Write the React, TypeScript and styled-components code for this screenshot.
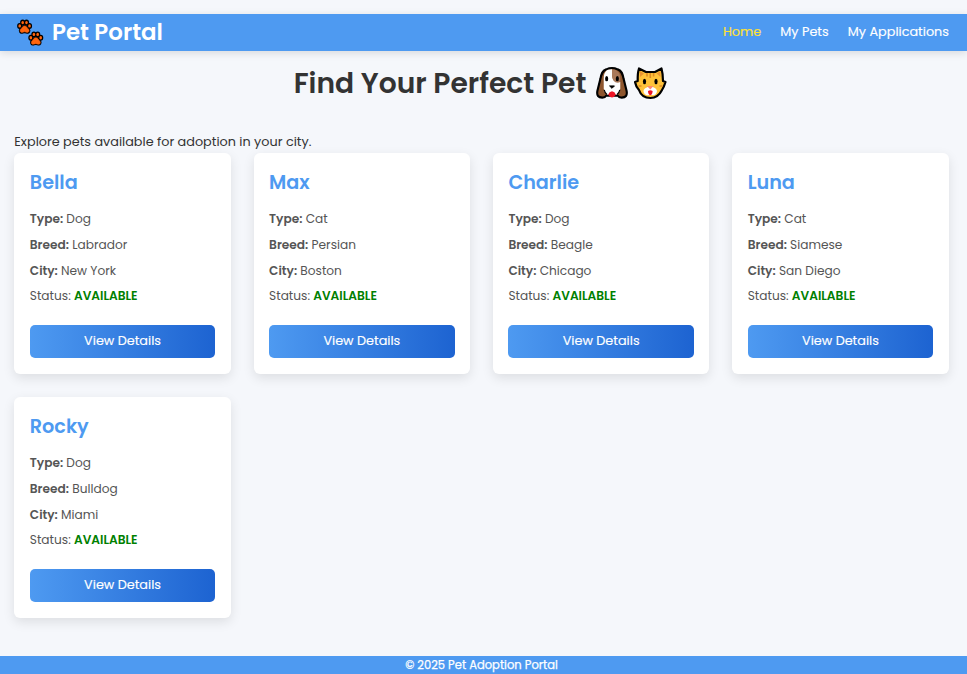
import React from "react";
import styled, { createGlobalStyle } from "styled-components";

const Global = createGlobalStyle`
  * { box-sizing: border-box; margin: 0; padding: 0; }
  body {
    background: #f5f7fb;
    color: #333;
    font-family: Poppins, Inter, sans-serif;
  }
`;

const Page = styled.div`
  height: 674px;
  padding-top: 14px;
  display: flex;
  flex-direction: column;
  overflow: hidden;
`;

const Header = styled.header`
  height: 37px;
  flex: none;
  padding: 0 18px 0 16px;
  display: flex;
  align-items: center;
  justify-content: space-between;
  background: #4e9af1;
  box-shadow: 0 2px 8px rgba(0, 0, 0, 0.12);
`;

const Brand = styled.div`
  display: flex;
  align-items: center;
  gap: 8px;
  color: #fff;
  font-size: 22.9px;
  font-weight: 600;
  line-height: 35px;
  white-space: nowrap;

  > span { padding-bottom: 1px; }
`;

const Nav = styled.nav`
  display: flex;
  gap: 19.2px;
  padding-bottom: 2px;
`;

const NavLink = styled.a<{ $active?: boolean }>`
  color: ${(p) => (p.$active ? "#ffe135" : "#fff")};
  font-size: 12.8px;
  font-weight: 400;
  line-height: 20px;
  white-space: nowrap;
  -webkit-text-stroke: 0.15px currentColor;
`;

const Main = styled.main`
  flex: 1;
  padding: 0 18.3px 0 14.3px;
`;

const Title = styled.h1`
  height: 64px;
  display: flex;
  align-items: center;
  justify-content: center;
  padding-right: 2px;
  font-size: 28.16px;
  font-weight: 600;
  white-space: nowrap;

  > span:first-child { padding-top: 1px; }
`;

const Faces = styled.span`
  display: flex;
  gap: 4px;
  margin-left: 9px;
`;

const Intro = styled.p`
  height: 21px;
  margin-top: 17px;
  font-size: 12.8px;
  line-height: 20px;
`;

const Grid = styled.section`
  display: grid;
  grid-template-columns: repeat(4, 1fr);
  gap: 23px 22.8px;
`;

const Card = styled.article`
  height: 221px;
  padding: 15px 15.5px 16px;
  display: flex;
  flex-direction: column;
  border-radius: 6px;
  background: #fff;
  box-shadow: 0 4px 12px rgba(0, 0, 0, 0.1);
`;

const Name = styled.h2`
  margin-bottom: 8px;
  color: #4e9af1;
  font-size: 19.2px;
  font-weight: 600;
  line-height: 30px;
`;

const Detail = styled.p`
  color: #555;
  font-size: 12.16px;
  line-height: 25.8px;
  white-space: nowrap;

  strong { font-weight: 600; }
`;

const Status = styled.strong`
  color: green;
`;

const DetailsButton = styled.button`
  height: 33px;
  margin-top: auto;
  padding-bottom: 2px;
  border: 0;
  border-radius: 5px;
  background: linear-gradient(90deg, #4e9af1, #1d63d1);
  color: #fff;
  font: 400 12.8px Poppins, Inter, sans-serif;
  -webkit-text-stroke: 0.15px currentColor;
`;

const Footer = styled.footer`
  height: 18px;
  flex: none;
  background: #4e9af1;
  color: #fff;
  font-size: 11.52px;
  font-weight: 400;
  line-height: 18px;
  text-align: center;
  padding-right: 4px;
  -webkit-text-stroke: 0.25px currentColor;
`;

const Paw = () => (
  <>
    <g stroke="#000" strokeWidth="2.6" fill="#000">
      <ellipse cx="2.4" cy="6" rx="1.3" ry="1.7" />
      <ellipse cx="5.4" cy="2.7" rx="1.3" ry="1.7" />
      <ellipse cx="9.2" cy="2.7" rx="1.3" ry="1.7" />
      <ellipse cx="12.2" cy="6" rx="1.3" ry="1.7" />
      <path d="M7.3 6C5.2 6 4.7 8 3.5 9.2 1.9 11 3.3 13 5 12.5Q7.3 11.4 9.6 12.5C11.3 13 12.7 11 11.1 9.2 9.9 8 9.4 6 7.3 6Z" />
    </g>
    <g fill="#ff650d">
      <ellipse cx="2.4" cy="6" rx="1.3" ry="1.7" />
      <ellipse cx="5.4" cy="2.7" rx="1.3" ry="1.7" />
      <ellipse cx="9.2" cy="2.7" rx="1.3" ry="1.7" />
      <ellipse cx="12.2" cy="6" rx="1.3" ry="1.7" />
      <path d="M7.3 6C5.2 6 4.7 8 3.5 9.2 1.9 11 3.3 13 5 12.5Q7.3 11.4 9.6 12.5C11.3 13 12.7 11 11.1 9.2 9.9 8 9.4 6 7.3 6Z" stroke="#ff650d" strokeWidth=".5" />
    </g>
  </>
);

const Paws = () => (
  <svg width="28" height="28" viewBox="0 0 28 28">
    <g transform="translate(1.3 .9)"><Paw /></g>
    <g transform="translate(12.5 12.7)"><Paw /></g>
  </svg>
);

const DogFace = () => (
  <svg width="34" height="34" viewBox="-.5 0 35 34">
    <path d="M11 3C7 4 6 8 5 13L2 25C1 30 3 32 7 32Q10 32 11 30H23Q24 32 27 32C31 32 33 30 32 25L29 13C28 8 27 4 23 3Q17 .5 11 3Z" fill="#8e562e" stroke="#000" strokeWidth="2.2" strokeLinejoin="round" />
    <path d="M17 2.8C11 2.5 8.5 6 8.5 12V23Q9 27 12 29H22Q25 27 25.5 23V16L20 15Q17 13 17 8Z" fill="#fff" />
    <path d="M17 2.8V9C17 15 21 18 25.5 16V12C25.5 7 23 3 17 2.8Z" fill="#a9795a" />
    <path d="M9 24Q9.5 27 12 29M25 24Q24.5 27 22 29" fill="none" stroke="#000" strokeWidth="1.2" />
    <ellipse cx="11.5" cy="12.5" rx="1.6" ry="2.8" />
    <ellipse cx="22.5" cy="12.5" rx="1.6" ry="2.8" />
    <path d="M14.5 20H19.5L17 22.5Z" stroke="#000" strokeLinejoin="round" />
    <path d="M13 29Q14 26 17 25.5 20 26 21 29 19 31.8 17 31.8 15 31.8 13 29Z" fill="#ed1525" />
  </svg>
);

const CatFace = () => (
  <svg width="34" height="34" viewBox="0 0 34 34">
    <path d="M6 2.5L13 6H22L28.5 2.5Q30 8 30 15L32.5 16Q31 21 29 24C26 30 22 32 17.5 32S8 30 6 24Q3 21 2 16L4.7 15Q4.5 7 6 2.5Z" fill="#ffc23a" stroke="#000" strokeWidth="2.2" strokeLinejoin="round" />
    <path d="M7 5L11 7.5 7 11ZM27.5 5L23.5 7.5 27.5 11Z" fill="#e99431" />
    <path d="M14 7V10.5M17.3 7V12M20.6 7V10.5M5.5 20H8.5M26.5 20H29.5" stroke="#de8b25" strokeWidth="1.6" />
    <ellipse cx="11.5" cy="15.5" rx="1.6" ry="2.7" />
    <ellipse cx="23" cy="15.5" rx="1.6" ry="2.7" />
    <path d="M17.3 20C15 21 11 22 10.5 25 10.5 29 15 30 17.3 28.5 19.6 30 24 29 24 25 23.5 22 19.6 21 17.3 20Z" fill="#fff" />
    <path d="M14 20H20.5L17.3 23.5Z" fill="#ff876d" />
    <path d="M15 25Q17.3 23.5 19.6 25 19.4 28.8 17.3 29.3 15.2 28.8 15 25Z" fill="#ed1525" />
  </svg>
);

const pets = [
  { name: "Bella", type: "Dog", breed: "Labrador", city: "New York" },
  { name: "Max", type: "Cat", breed: "Persian", city: "Boston" },
  { name: "Charlie", type: "Dog", breed: "Beagle", city: "Chicago" },
  { name: "Luna", type: "Cat", breed: "Siamese", city: "San Diego" },
  { name: "Rocky", type: "Dog", breed: "Bulldog", city: "Miami" },
];

export default function App() {
  return (
    <>
      <Global />
      <Page>
        <Header>
          <Brand><Paws /><span>Pet Portal</span></Brand>
          <Nav>
            <NavLink $active>Home</NavLink>
            <NavLink>My Pets</NavLink>
            <NavLink>My Applications</NavLink>
          </Nav>
        </Header>
        <Main>
          <Title><span>Find Your Perfect Pet</span><Faces><DogFace /><CatFace /></Faces></Title>
          <Intro>Explore pets available for adoption in your city.</Intro>
          <Grid>
            {pets.map((pet) => (
              <Card key={pet.name}>
                <Name>{pet.name}</Name>
                <Detail><strong>Type:</strong> {pet.type}</Detail>
                <Detail><strong>Breed:</strong> {pet.breed}</Detail>
                <Detail><strong>City:</strong> {pet.city}</Detail>
                <Detail>Status: <Status>AVAILABLE</Status></Detail>
                <DetailsButton>View Details</DetailsButton>
              </Card>
            ))}
          </Grid>
        </Main>
        <Footer>© 2025 Pet Adoption Portal</Footer>
      </Page>
    </>
  );
}
